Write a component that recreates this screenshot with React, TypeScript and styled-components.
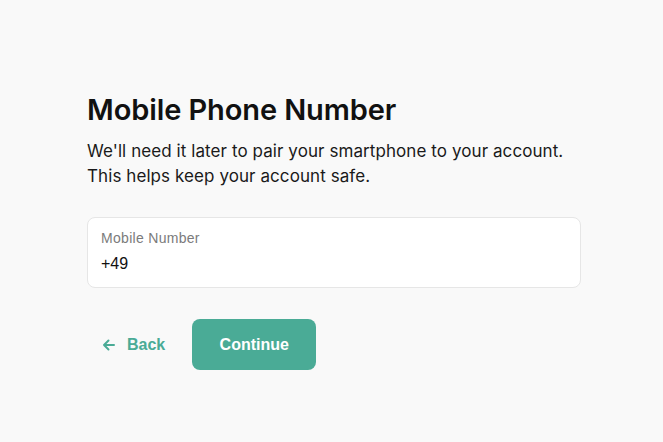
import styled, { createGlobalStyle } from "styled-components";

const GlobalStyle = createGlobalStyle`
  html, body {
    margin: 0;
    padding: 0;
    background: #f9f9f9;
  }
  body {
    font-family: Inter, "Liberation Sans", sans-serif;
    color: #111;
  }
`;

const Page = styled.div`
  width: 663px;
  height: 442px;
  box-sizing: border-box;
  padding: 92px 0 0 87px;
`;

const Form = styled.div`
  width: 494px;
  display: flex;
  flex-direction: column;
`;

const Title = styled.h1`
  margin: 0;
  font-size: 29px;
  font-weight: 600;
  line-height: 36px;
  letter-spacing: -0.1px;
  color: #111;
`;

const Lead = styled.p`
  margin: 11px 0 0;
  font-size: 17px;
  line-height: 25px;
  letter-spacing: 0.08px;
  color: #1a1a1a;
`;

const Field = styled.label`
  margin-top: 28px;
  display: flex;
  flex-direction: column;
  gap: 9px;
  height: 71px;
  box-sizing: border-box;
  padding: 12px 13px 0;
  background: #fff;
  border: 1px solid #e6e6e6;
  border-radius: 8px;
`;

const FieldLabel = styled.span`
  font-family: "Liberation Sans", Arial, sans-serif;
  font-size: 14px;
  letter-spacing: 0.3px;
  color: #7b7b7b;
`;

const FieldInput = styled.input`
  border: none;
  outline: none;
  padding: 0;
  background: transparent;
  font-family: "Liberation Sans", Arial, sans-serif;
  font-size: 16px;
  color: #111;
`;

const Actions = styled.div`
  margin-top: 31px;
  display: flex;
  align-items: center;
  gap: 27px;
`;

const BackButton = styled.button`
  display: flex;
  align-items: center;
  gap: 11px;
  border: none;
  background: none;
  padding: 0 0 0 15px;
  font-family: "Liberation Sans", Arial, sans-serif;
  font-size: 16px;
  font-weight: 700;
  color: #4aab96;
  cursor: pointer;
`;

const PrimaryButton = styled.button`
  width: 124px;
  height: 51px;
  border: none;
  border-radius: 8px;
  background: #4aab96;
  color: #fff;
  font-family: "Liberation Sans", Arial, sans-serif;
  font-size: 16px;
  font-weight: 700;
  cursor: pointer;
`;

export default function App() {
  return (
    <Page>
      <GlobalStyle />
      <Form>
        <Title>Mobile Phone Number</Title>
        <Lead>
          We'll need it later to pair your smartphone to your account.
          <br />
          This helps keep your account safe.
        </Lead>
        <Field>
          <FieldLabel>Mobile Number</FieldLabel>
          <FieldInput defaultValue="+49" />
        </Field>
        <Actions>
          <BackButton>
            <svg width="14" height="14" viewBox="0 0 14 14" fill="none" stroke="currentColor" strokeWidth="2" strokeLinecap="round" strokeLinejoin="round">
              <path d="M12 7H2M6.5 2.5L2 7l4.5 4.5" />
            </svg>
            Back
          </BackButton>
          <PrimaryButton>Continue</PrimaryButton>
        </Actions>
      </Form>
    </Page>
  );
}
